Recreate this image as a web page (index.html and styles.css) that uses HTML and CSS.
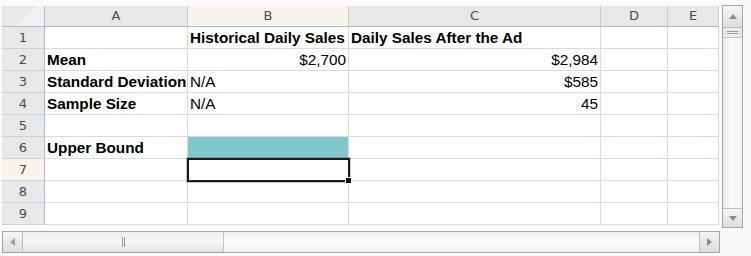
FILE: index.html
```html
<!DOCTYPE html>
<html lang="en">
<head>
  <meta charset="UTF-8" />
  <title>Upper Bound - Daily Sales</title>
  <link rel="stylesheet" href="styles.css">
</head>
<body>
  <div class="workbook">
    <div class="sheet-area">
      <div class="sheet">
        <div class="corner"></div>
        <div class="col-head">A</div>
        <div class="col-head active">B</div>
        <div class="col-head">C</div>
        <div class="col-head">D</div>
        <div class="col-head">E</div>

        <div class="row-head">1</div>
        <div class="cell"></div>
        <div class="cell bold">Historical Daily Sales</div>
        <div class="cell bold">Daily Sales After the Ad</div>
        <div class="cell"></div>
        <div class="cell"></div>

        <div class="row-head">2</div>
        <div class="cell bold">Mean</div>
        <div class="cell num">$2,700</div>
        <div class="cell num">$2,984</div>
        <div class="cell"></div>
        <div class="cell"></div>

        <div class="row-head">3</div>
        <div class="cell bold">Standard Deviation</div>
        <div class="cell">N/A</div>
        <div class="cell num">$585</div>
        <div class="cell"></div>
        <div class="cell"></div>

        <div class="row-head">4</div>
        <div class="cell bold">Sample Size</div>
        <div class="cell">N/A</div>
        <div class="cell num">45</div>
        <div class="cell"></div>
        <div class="cell"></div>

        <div class="row-head">5</div>
        <div class="cell"></div>
        <div class="cell"></div>
        <div class="cell"></div>
        <div class="cell"></div>
        <div class="cell"></div>

        <div class="row-head">6</div>
        <div class="cell bold">Upper Bound</div>
        <div class="cell teal"></div>
        <div class="cell"></div>
        <div class="cell"></div>
        <div class="cell"></div>

        <div class="row-head active">7</div>
        <div class="cell"></div>
        <div class="cell selected"><span class="fill-handle"></span></div>
        <div class="cell"></div>
        <div class="cell"></div>
        <div class="cell"></div>

        <div class="row-head">8</div>
        <div class="cell"></div>
        <div class="cell"></div>
        <div class="cell"></div>
        <div class="cell"></div>
        <div class="cell"></div>

        <div class="row-head">9</div>
        <div class="cell"></div>
        <div class="cell"></div>
        <div class="cell"></div>
        <div class="cell"></div>
        <div class="cell"></div>
      </div>

      <div class="vscroll">
        <div class="sb-btn up"><span class="arrow-up"></span></div>
        <div class="vthumb"><span class="grip-h"></span></div>
        <div class="track"></div>
        <div class="sb-btn down"><span class="arrow-down"></span></div>
      </div>
    </div>

    <div class="hscroll">
      <div class="sb-btn left"><span class="arrow-left"></span></div>
      <div class="hthumb"><span class="grip-v"></span></div>
      <div class="track"></div>
      <div class="sb-btn right"><span class="arrow-right"></span></div>
    </div>
  </div>
</body>
</html>
```

FILE: styles.css
```css
body {
  margin: 0;
  background-color: #fafafa;
  font-family: "Liberation Sans", Arial, sans-serif;
}

.workbook {
  padding: 6px 0 0 2px;
}

.sheet-area {
  display: flex;
  align-items: flex-start;
  gap: 3px;
}

.sheet {
  display: grid;
  grid-template-columns: 43px 143px 161px 252px 67px 51px;
  grid-template-rows: 21px repeat(9, 22px);
  background-color: white;
}

.corner,
.col-head,
.row-head,
.cell {
  box-sizing: border-box;
  border-right: 1px solid #d3dce7;
  border-bottom: 1px solid #d3dce7;
}

.corner {
  background: linear-gradient(135deg, #e8e8e8 55%, #f1f1f1 55%);
  border-right-color: #a9bdd1;
  border-bottom-color: #a9bdd1;
}

.col-head {
  background-color: #e8e8e8;
  border-right-color: #c3cfdc;
  border-bottom-color: #a9bdd1;
  font-family: "DejaVu Sans", sans-serif;
  font-size: 13px;
  color: #4a4a4a;
  text-align: center;
  line-height: 20px;
}

.row-head {
  background-color: #e8e8e8;
  border-right-color: #a9bdd1;
  border-bottom-color: #c9d3de;
  font-family: "DejaVu Sans", sans-serif;
  font-size: 13px;
  color: #4a4a4a;
  text-align: center;
  line-height: 22px;
}

.col-head.active,
.row-head.active {
  background-color: #f8f5ea;
}

.cell {
  padding: 0 2px;
  font-size: 15.3px;
  line-height: 21px;
  color: #000;
  white-space: nowrap;
  overflow: visible;
}

.bold {
  font-weight: bold;
}

.num {
  text-align: right;
}

.teal {
  background-color: #82c6c9;
}

.selected {
  position: relative;
}

.selected::after {
  content: "";
  position: absolute;
  left: -1px;
  top: -1px;
  right: -2px;
  bottom: -2px;
  border: 2px solid #1a1a1a;
  box-shadow: 0 0 0 1px rgba(80, 80, 80, 0.35);
}

.fill-handle {
  position: absolute;
  right: -4px;
  bottom: -4px;
  width: 5px;
  height: 5px;
  background-color: #111;
  border: 1px solid white;
  z-index: 1;
}

/* scrollbars */
.vscroll {
  margin-top: -1px;
  width: 21px;
  height: 223px;
  box-sizing: border-box;
  border: 1px solid #a5a5a5;
  display: flex;
  flex-direction: column;
  background: linear-gradient(to right, #ececec, #fbfbfb 40%, #f3f3f3);
}

.hscroll {
  margin-top: 3px;
  width: 718px;
  height: 22px;
  box-sizing: border-box;
  border: 1px solid #a5a5a5;
  display: flex;
  background: linear-gradient(#ececec, #fbfbfb 40%, #f3f3f3);
}

.track {
  flex: 1;
}

.sb-btn {
  display: flex;
  align-items: center;
  justify-content: center;
  background: linear-gradient(#f6f6f6, #dedede);
}

.sb-btn.up {
  height: 21px;
  border-bottom: 1px solid #bdbdbd;
}

.sb-btn.down {
  height: 18px;
  border-top: 1px solid #bdbdbd;
}

.sb-btn.left {
  width: 19px;
  border-right: 1px solid #bdbdbd;
}

.sb-btn.right {
  width: 19px;
  border-left: 1px solid #bdbdbd;
  background: linear-gradient(#f4f4f4, #dcdcdc);
}

.arrow-up {
  border: 4px solid transparent;
  border-bottom: 5px solid #8c8c8c;
  border-top: 0;
}

.arrow-down {
  border: 4px solid transparent;
  border-top: 5px solid #8c8c8c;
  border-bottom: 0;
}

.arrow-left {
  border: 4px solid transparent;
  border-right: 5px solid #a0a0a0;
  border-left: 0;
}

.arrow-right {
  border: 4px solid transparent;
  border-left: 5px solid #8c8c8c;
  border-right: 0;
}

.vthumb {
  height: 9px;
  display: flex;
  align-items: center;
  justify-content: center;
  background: linear-gradient(to right, #e2e2e2, #f4f4f4 50%, #e2e2e2);
  border-bottom: 1px solid #c6c6c6;
}

.grip-h {
  width: 11px;
  height: 3px;
  border-top: 1px solid #9a9a9a;
  border-bottom: 1px solid #9a9a9a;
  box-sizing: border-box;
}

.hthumb {
  width: 200px;
  display: flex;
  align-items: center;
  justify-content: center;
  background: linear-gradient(#ececec, #f8f8f8 50%, #e4e4e4);
  border-right: 1px solid #c6c6c6;
}

.grip-v {
  width: 3px;
  height: 10px;
  border-left: 1px solid #9a9a9a;
  border-right: 1px solid #9a9a9a;
  box-sizing: border-box;
}
```
